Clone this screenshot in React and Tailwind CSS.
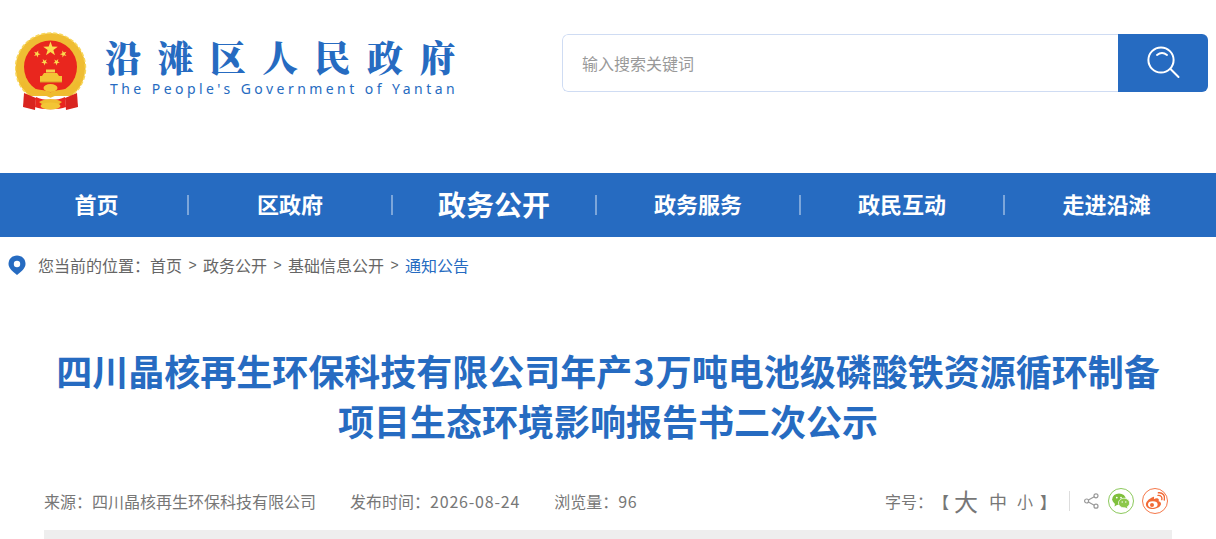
import React from "react";

const CJK = "font-['Noto_Sans_CJK_SC','Liberation_Sans',sans-serif]";

function Star({ cx, cy, r, rot = 0 }) {
  const pts = [];
  for (let i = 0; i < 10; i++) {
    const rad = i % 2 ? r * 0.4 : r;
    const a = ((-90 + rot + i * 36) * Math.PI) / 180;
    pts.push(`${(cx + rad * Math.cos(a)).toFixed(2)},${(cy + rad * Math.sin(a)).toFixed(2)}`);
  }
  return <polygon points={pts.join(" ")} fill="#fbdc4f" />;
}

function Emblem() {
  return (
    <svg width="72" height="78" viewBox="0 0 72 78" className="shrink-0">
      <path d="M14.5 64 A35 35 0 1 1 56.5 64 Z" fill="#efbd33" />
      <path d="M14.5 64 A35 35 0 1 1 56.5 64" fill="none" stroke="#f8d75a" strokeWidth="1.5" strokeDasharray="4 2" />
      <circle cx="35.5" cy="35" r="26.5" fill="#e9261e" />
      <Star cx={35.5} cy={17} r={7.6} />
      <Star cx={22} cy={22} r={3.6} rot={20} />
      <Star cx={48.5} cy={22} r={3.6} rot={-20} />
      <Star cx={29.5} cy={30} r={3.4} rot={40} />
      <Star cx={41.5} cy={30} r={3.4} rot={-40} />
      <rect x="31" y="37.5" width="9" height="3" fill="#f6d24c" />
      <path d="M29 41 L42 41 L44 44 L27 44 Z" fill="#f3c535" />
      <rect x="25" y="44" width="22" height="6" fill="#f3c535" />
      <rect x="25" y="49.5" width="22" height="1" fill="#d99a26" />
      <path d="M9 61 L21 66 L20 78 L8 75 Z" fill="#d9241f" />
      <path d="M62 61 L50 66 L51 78 L63 75 Z" fill="#d9241f" />
      <path d="M7 50 C13 63 26 58 35.5 63 C45 58 58 63 64 50" fill="none" stroke="#efbb2e" strokeWidth="5" />
      <ellipse cx="35.5" cy="56" rx="7" ry="4" fill="#f3c535" />
      <path d="M21 65 C28 69 43 69 50 65 L51 75 C44 78 27 78 20 75 Z" fill="#e9261e" />
      <path d="M24 70 C30 66 41 66 47 70 C41 75 30 75 24 70 Z" fill="#efbb2e" />
      <ellipse cx="35.5" cy="74" rx="10" ry="3.4" fill="#f3c535" />
    </svg>
  );
}

function SearchIcon() {
  return (
    <svg width="34" height="34" viewBox="0 0 34 34" fill="none" stroke="#fff" strokeWidth="2" strokeLinecap="round">
      <circle cx="15" cy="14" r="12.6" />
      <path d="M24.5 23 L32.5 31" />
      <path d="M11 9 Q16 5 21 9" />
    </svg>
  );
}

function PinIcon() {
  return (
    <svg width="18" height="20" viewBox="0 0 18 20" className="shrink-0">
      <path d="M9 0.5 C4 0.5 0.5 4 0.5 9 C0.5 13 5 17 9 20 C13 17 17.5 13 17.5 9 C17.5 4 14 0.5 9 0.5 Z" fill="#266bc1" />
      <circle cx="9" cy="9" r="3.2" fill="#fff" />
    </svg>
  );
}

function ShareIcon() {
  return (
    <svg width="15" height="16" viewBox="0 0 15 16" fill="none" stroke="#999" strokeWidth="1.2">
      <circle cx="12" cy="2.8" r="2" />
      <circle cx="12" cy="13.2" r="2" />
      <circle cx="2.6" cy="8" r="2" />
      <path d="M4.4 7 L10.2 3.8 M4.4 9 L10.2 12.2" />
    </svg>
  );
}

function WechatIcon() {
  return (
    <div className="flex h-[26px] w-[26px] items-center justify-center rounded-full border border-[#8cc95c] bg-white">
      <svg width="18" height="16" viewBox="0 0 18 16">
        <ellipse cx="7" cy="6.2" rx="6.8" ry="5.8" fill="#7fc03c" />
        <path d="M3 10 L2.6 13.4 L6.5 11 Z" fill="#7fc03c" />
        <ellipse cx="12" cy="10" rx="5.6" ry="4.8" fill="#8cc84a" stroke="#fff" strokeWidth="0.7" />
        <path d="M14.5 13 L15.5 15.6 L12.5 14 Z" fill="#8cc84a" />
        <circle cx="4.8" cy="4.6" r="0.9" fill="#fff" />
        <circle cx="9" cy="4.6" r="0.9" fill="#fff" />
        <circle cx="10.2" cy="9" r="0.7" fill="#fff" />
        <circle cx="13.8" cy="9" r="0.7" fill="#fff" />
      </svg>
    </div>
  );
}

function WeiboIcon() {
  return (
    <div className="flex h-[26px] w-[26px] items-center justify-center rounded-full border border-[#f5784a] bg-white">
      <svg width="20" height="18" viewBox="0 0 20 18">
        <path d="M8 5 C3.5 7 0.5 10 1 13 C1.5 16 5 17.4 8.5 17 C12.5 16.6 16 14.4 16 11.8 C16 10.2 14.5 9.6 13.6 9.3 C14 8 14 6.8 12.8 6.4 C11.6 6 10 6.6 8.8 7.2 C9.4 5.4 9.2 4.4 8 5 Z" fill="#f26a36" />
        <ellipse cx="7.8" cy="12.6" rx="4.8" ry="3.3" fill="#fff" />
        <circle cx="7" cy="13" r="2" fill="#f26a36" />
        <path d="M13 3.4 C15.6 3 17.4 5 16.8 7.6 M13.4 0.8 C17.6 0.2 20.4 3.6 19.2 8" fill="none" stroke="#f26a36" strokeWidth="1.4" strokeLinecap="round" />
      </svg>
    </div>
  );
}

function NavItem({ children, large, className }) {
  return (
    <a className={`flex h-full items-center justify-center font-bold text-white ${large ? "pb-[2px] text-[28px]" : "pb-[4px] text-[22px]"} ${className}`}>
      {children}
    </a>
  );
}

function Divider() {
  return <span className="h-5 w-0.5 shrink-0 bg-white/40" />;
}

export default function App() {
  return (
    <div className={`h-[539px] w-[1216px] overflow-hidden bg-white ${CJK}`}>
      <header className="flex h-[173px] items-start justify-between pr-2 pl-[15px]">
        <div className="mt-[32px] flex">
          <Emblem />
          <div className="ml-[18px] pt-[4px]">
            <div className="h-[42px] text-[36px] leading-[42px] font-black tracking-[16.4px] whitespace-nowrap text-[#266bc1] font-['Noto_Serif_CJK_SC','Noto_Sans_CJK_SC',serif]">
              沿滩区人民政府
            </div>
            <div className="mt-[3px] ml-[5px] font-['Noto_Sans',sans-serif] text-[14px] leading-[16px] tracking-[3.45px] whitespace-nowrap text-[#266bc1]">
              The People's Government of Yantan
            </div>
          </div>
        </div>
        <div className="mt-[34px] flex h-[58px] w-[646px] overflow-hidden rounded-md">
          <div className="flex flex-1 items-center rounded-l-md border border-r-0 border-[#cfdcf3] pl-[19px] text-[16px] text-[#999]">
            输入搜索关键词
          </div>
          <button className="flex w-[90px] items-center justify-center bg-[#266bc1]">
            <SearchIcon />
          </button>
        </div>
      </header>

      <nav className="flex h-[64px] items-center bg-[#266bc1]">
        <NavItem className="w-[187px] pl-[6px]">首页</NavItem>
        <Divider />
        <NavItem className="w-[202px]">区政府</NavItem>
        <Divider />
        <NavItem large className="w-[202px]">政务公开</NavItem>
        <Divider />
        <NavItem className="w-[202px]">政务服务</NavItem>
        <Divider />
        <NavItem className="w-[202px]">政民互动</NavItem>
        <Divider />
        <NavItem className="flex-1 pr-[8px]">走进沿滩</NavItem>
      </nav>

      <div className="mt-[18px] flex h-5 items-center pl-2 text-[16px] leading-5 whitespace-nowrap text-[#666]">
        <PinIcon />
        <span className="ml-[12px]">您当前的位置：</span>
        <span>首页</span>
        <span className="mx-[6.4px] font-['Liberation_Sans'] text-[14px]">&gt;</span>
        <span>政务公开</span>
        <span className="mx-[6.4px] font-['Liberation_Sans'] text-[14px]">&gt;</span>
        <span>基础信息公开</span>
        <span className="mx-[6.4px] font-['Liberation_Sans'] text-[14px]">&gt;</span>
        <span className="text-[#266bc1]">通知公告</span>
      </div>

      <h1 className="mt-[70px] px-[44px] text-center text-[36px] leading-[50px] font-bold text-[#266bc1]">
        四川晶核再生环保科技有限公司年产<span className="px-px">3</span>万吨电池级磷酸铁资源循环制备
        <br />
        项目生态环境影响报告书二次公示
      </h1>

      <div className="mx-[44px] mt-[40px] flex h-[54px] flex-col">
        <div className="flex h-[32px] items-center justify-between pr-[4px] text-[16px] text-[#777]">
          <div className="flex gap-[34px] whitespace-nowrap">
            <span>来源：四川晶核再生环保科技有限公司</span>
            <span>发布时间：<span className="tracking-[0.8px]">2026-08-24</span></span>
            <span>浏览量：<span className="tracking-[0.6px]">96</span></span>
          </div>
          <div className="flex items-center whitespace-nowrap">
            <span>字号：</span>
            <span className="font-bold">【</span>
            <span className="ml-[5px] text-[24px] leading-[24px]">大</span>
            <span className="ml-[11px] text-[18px] leading-[24px]">中</span>
            <span className="ml-[10px] text-[16px] leading-[24px]">小</span>
            <span className="ml-[7px] font-bold">】</span>
            <span className="mr-[14px] ml-[13px] h-5 w-px bg-[#ddd]" />
            <ShareIcon />
            <span className="w-[9px]" />
            <WechatIcon />
            <span className="w-2" />
            <WeiboIcon />
          </div>
        </div>
        <div className="mt-auto h-[9px] bg-[#eeeeee]" />
      </div>
    </div>
  );
}
